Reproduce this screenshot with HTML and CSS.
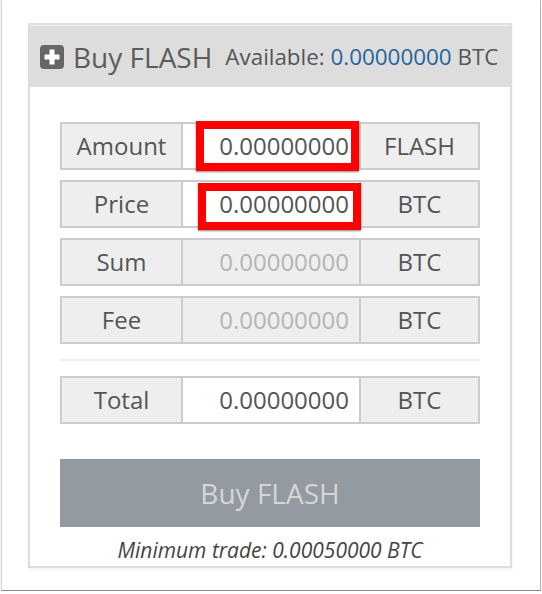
FILE: index.html
```html
<!DOCTYPE html>
<html>
<head>
<meta charset="utf-8">
<link rel="stylesheet" href="styles.css">
</head>
<body>
<div class="window">
  <div class="panel">
    <div class="panel-heading">
      <svg class="plus-icon" width="24" height="24" viewBox="0 0 24 24">
        <rect x="0" y="0" width="24" height="24" rx="4" fill="#666"/>
        <rect x="9.5" y="4.5" width="5" height="15" fill="#fff"/>
        <rect x="4.5" y="9.5" width="15" height="5" fill="#fff"/>
      </svg>
      <span class="title">Buy FLASH</span>
      <span class="available">Available: <span class="avail-val">0.00000000</span> BTC</span>
    </div>
    <div class="panel-body">
      <div class="row">
        <div class="cell label">Amount</div>
        <div class="cell input">0.00000000<span class="mark mark-amount"></span></div>
        <div class="cell unit">FLASH</div>
      </div>
      <div class="row">
        <div class="cell label">Price</div>
        <div class="cell input">0.00000000<span class="mark mark-price"></span></div>
        <div class="cell unit">BTC</div>
      </div>
      <div class="row">
        <div class="cell label">Sum</div>
        <div class="cell input disabled">0.00000000</div>
        <div class="cell unit">BTC</div>
      </div>
      <div class="row">
        <div class="cell label">Fee</div>
        <div class="cell input disabled">0.00000000</div>
        <div class="cell unit">BTC</div>
      </div>
      <div class="sep"></div>
      <div class="row">
        <div class="cell label">Total</div>
        <div class="cell input">0.00000000</div>
        <div class="cell unit">BTC</div>
      </div>
      <div class="btn">Buy FLASH</div>
      <div class="min-trade">Minimum trade: 0.00050000 BTC</div>
    </div>
  </div>
</div>
</body>
</html>
```
FILE: styles.css
```css
html, body {
  margin: 0;
  padding: 0;
  background: #fff;
}
body {
  padding-left: 1px;
  font-family: "Open Sans", "DejaVu Sans", sans-serif;
  color: #555;
}
.window {
  box-sizing: border-box;
  width: 540px;
  height: 591px;
  border-left: 1px solid #d4d4d4;
  border-right: 1px solid #b8b8b8;
  border-bottom: 1px solid #888;
  box-shadow: 0 1px 1px rgba(0,0,0,0.25);
  padding: 23px 27px 0 26px;
  background: #fff;
}
.panel {
  width: 484px;
  box-sizing: border-box;
  border: 2px solid #ddd;
  box-shadow: 0 2px 3px rgba(0,0,0,0.06);
  background: #fff;
}
.panel-heading {
  height: 61px;
  border-top: 1px solid #f2f2f2;
  background: #ddd;
  display: flex;
  align-items: center;
  padding-left: 10px;
}
.plus-icon {
  flex: none;
}
.title {
  font-size: 28px;
  color: #5c5c5c;
  margin-left: 9px;
  line-height: 1;
}
.available {
  font-size: 22.4px;
  color: #555;
  margin-left: 13px;
  line-height: 1;
  margin-top: 2px;
}
.avail-val {
  color: #26649c;
}
.panel-body {
  padding: 35px 30px 0 30px;
  height: 444px;
}
.row {
  display: grid;
  grid-template-columns: 119px 176px 117px;
  column-gap: 2px;
  background: #ccc;
  border: 2px solid #ccc;
  height: 44px;
  margin-bottom: 10px;
}
.cell {
  font-size: 24px;
  display: flex;
  align-items: center;
  background: #eee;
  color: #555;
  line-height: 1;
}
.label, .unit {
  justify-content: center;
}
.input {
  background: #fff;
  justify-content: flex-end;
  padding-right: 10px;
  position: relative;
}
.input.disabled {
  background: #eee;
  color: #b5b5b5;
}
.mark {
  position: absolute;
  border: 8px solid #f00;
  box-shadow: 0 1px 2px rgba(0,0,0,0.5);
}
.mark-amount {
  left: 13px;
  right: 0px;
  top: -3px;
  bottom: -3px;
}
.mark-price {
  left: 15px;
  right: -2px;
  top: 1px;
  bottom: -4px;
}
.sep {
  height: 2px;
  background: #eee;
  margin: 15px 0 15px;
}
.btn {
  margin-top: 35px;
  height: 68px;
  background: #939aa2;
  color: #d6d6d6;
  font-size: 28px;
  display: flex;
  align-items: center;
  justify-content: center;
}
.min-trade {
  text-align: center;
  font-style: italic;
  font-size: 21px;
  line-height: 28px;
  color: #444;
  margin-top: 9px;
}
```
